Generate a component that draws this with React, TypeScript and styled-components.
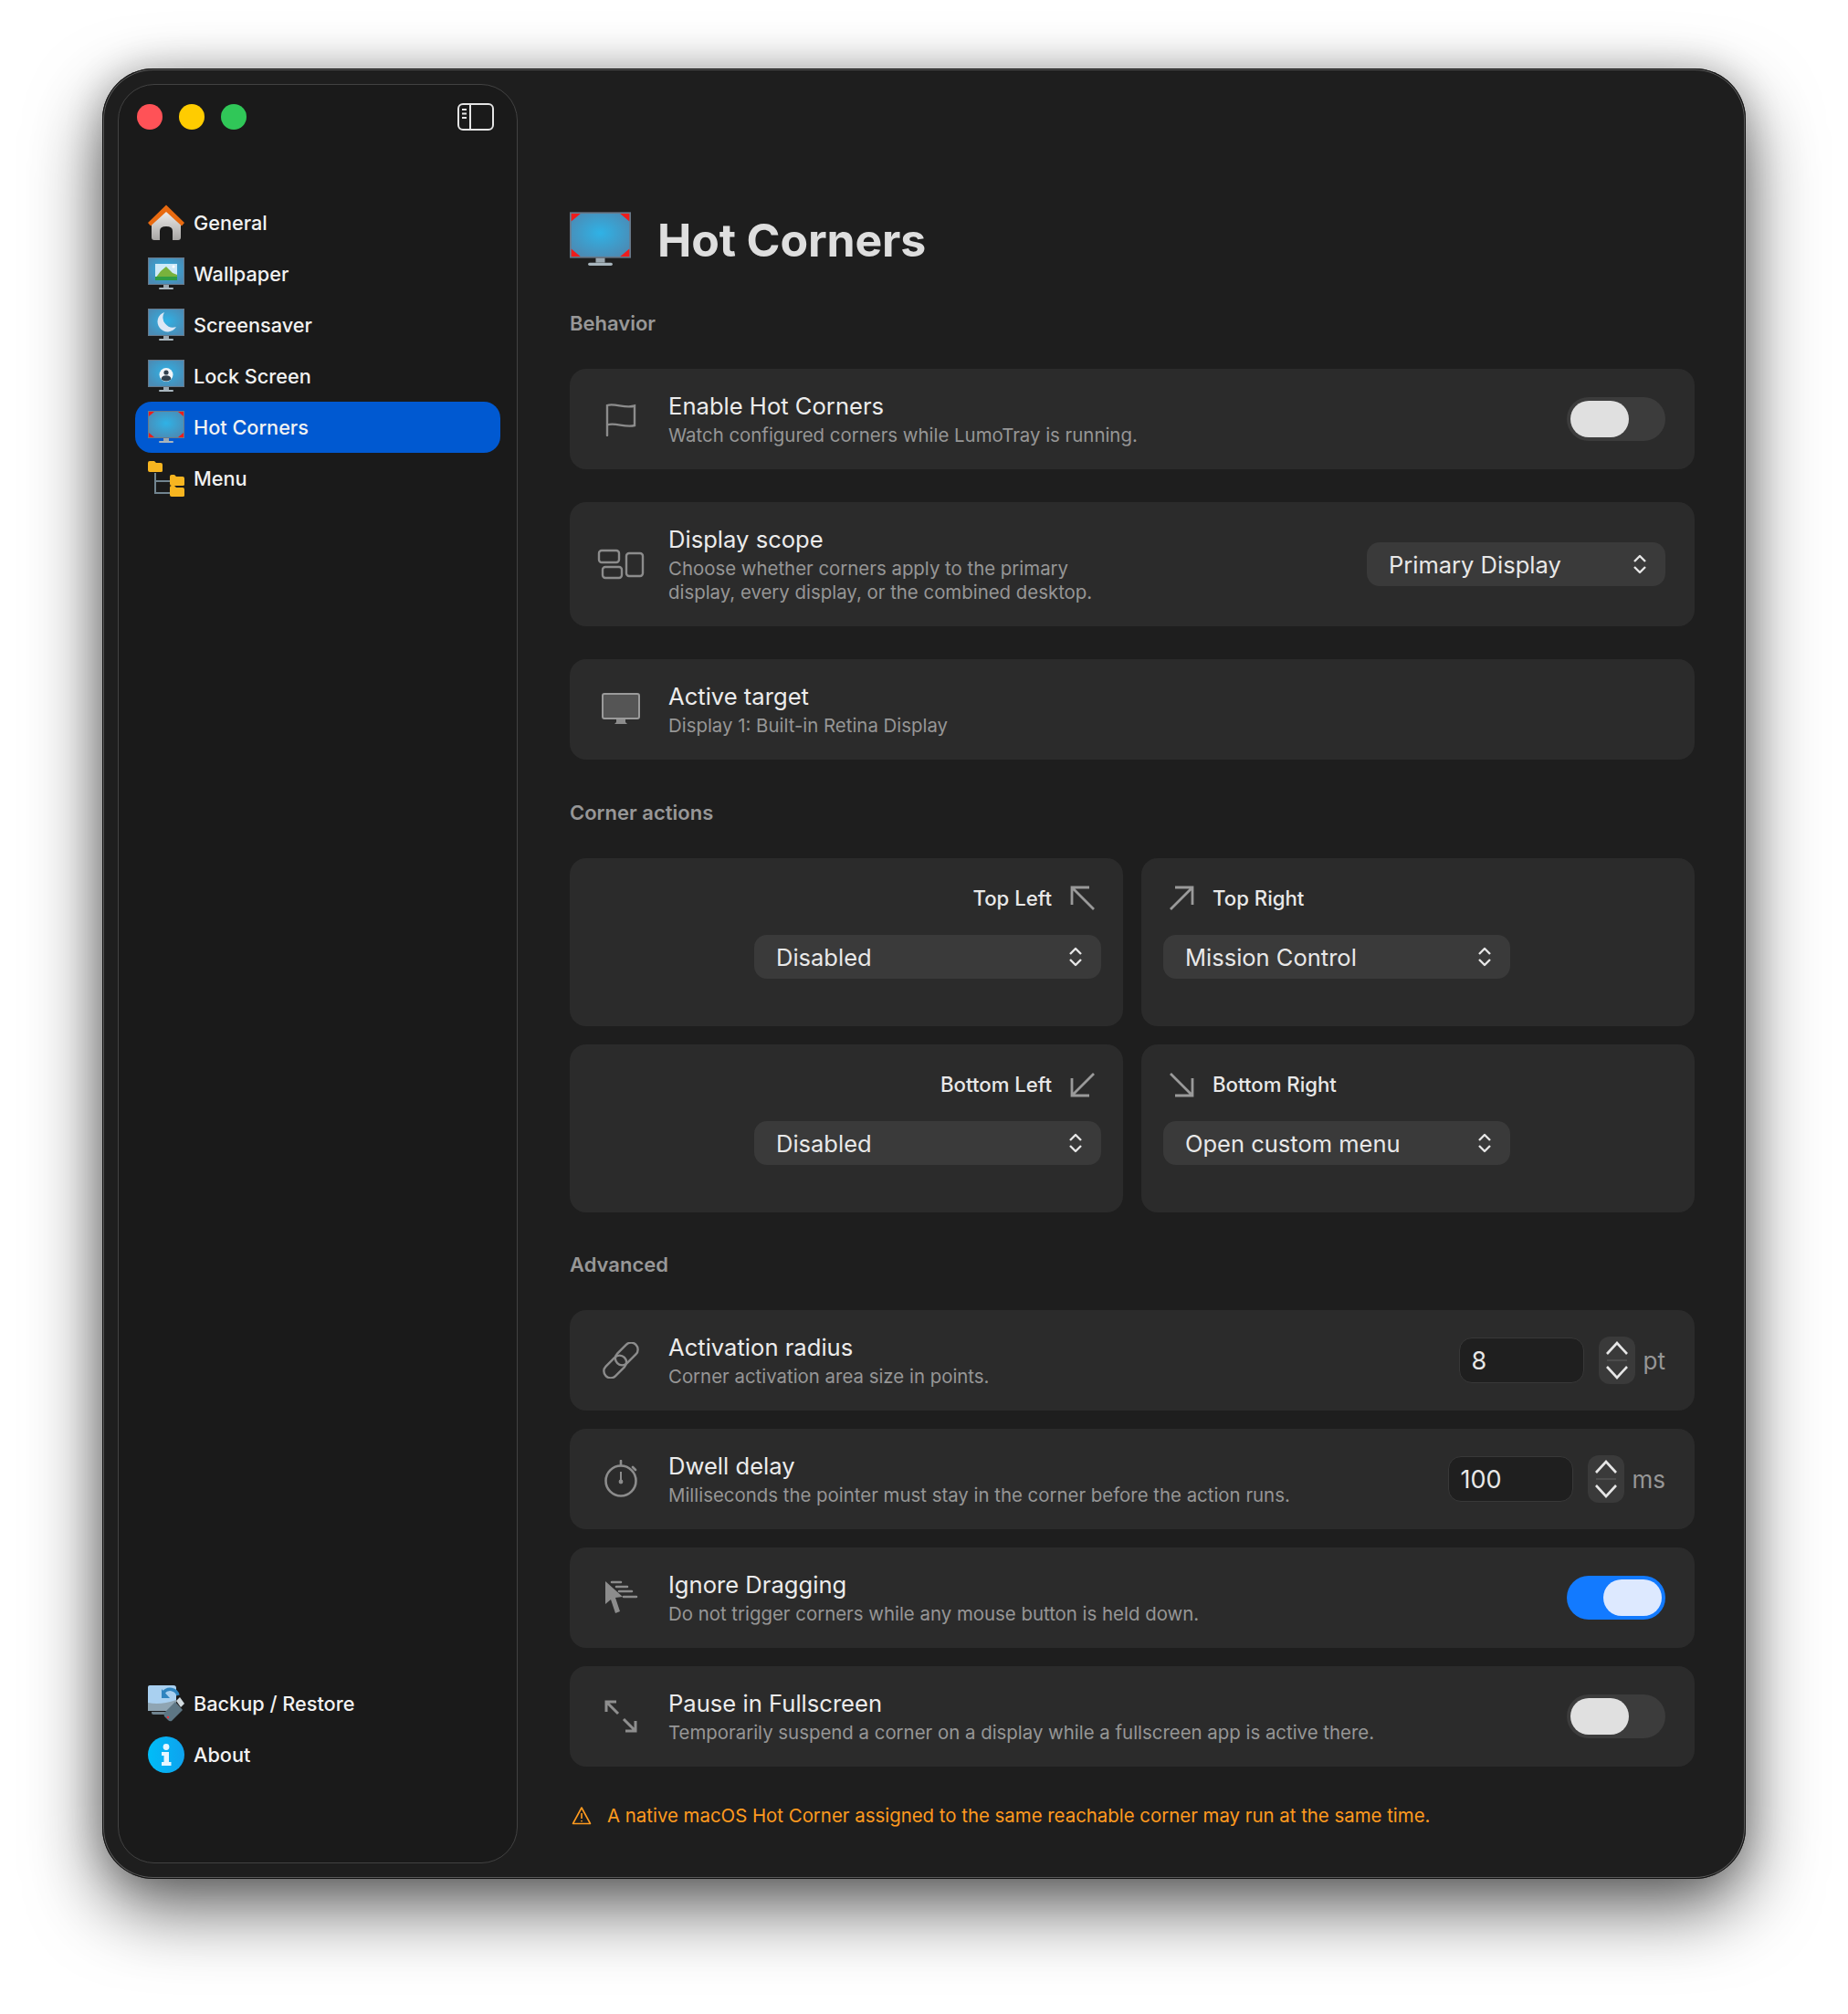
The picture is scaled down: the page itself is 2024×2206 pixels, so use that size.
import React from "react";
import styled, { createGlobalStyle } from "styled-components";

const GlobalStyle = createGlobalStyle`
  html, body {
    margin: 0;
    background: #fff;
  }
  body {
    font-family: Inter, "Noto Sans", sans-serif;
    -webkit-font-smoothing: antialiased;
  }
`;

const MonitorIcon: React.FC<{ id: string; size: number; children?: React.ReactNode }> = ({
  id,
  size,
  children,
}) => (
  <svg width={size} height={size} viewBox="0 0 40 40">
    <defs>
      <radialGradient id={id} cx="50%" cy="45%" r="60%">
        <stop offset="0%" stopColor="#2fb2e6" />
        <stop offset="100%" stopColor="#4a8cb6" />
      </radialGradient>
    </defs>
    <rect x="0" y="2" width="40" height="30" fill="#68798a" />
    <rect x="1" y="3" width="38" height="28" fill={`url(#${id})`} />
    <rect x="17" y="32" width="6" height="3" fill="#9aa7b0" />
    <rect x="12" y="35" width="16" height="2" rx="1" fill="#a9b6be" />
    {children}
  </svg>
);

const Corners = () => (
  <g fill="#ee1c1c">
    <path d="M1 3h6l-6 5z" />
    <path d="M39 3h-6l6 5z" />
    <path d="M1 31h6l-6-5z" />
    <path d="M39 31h-6l6-5z" />
  </g>
);

const HomeIcon = () => (
  <svg width="40" height="40" viewBox="0 0 40 40">
    <defs>
      <linearGradient id="home-wall" x1="0" y1="0" x2="0" y2="1">
        <stop offset="0%" stopColor="#f0efee" />
        <stop offset="100%" stopColor="#a8a6a4" />
      </linearGradient>
    </defs>
    <path
      fillRule="evenodd"
      d="M20 6 L36 20 V36 Q36 39 33 39 H27 V29 Q27 24 20 24 Q13 24 13 29 V39 H7 Q4 39 4 36 V20 Z"
      fill="url(#home-wall)"
    />
    <path d="M20 0.5 L40 20 L37 23.5 L20 8 L3 23.5 L0 20 Z" fill="#e86a10" />
  </svg>
);

const MenuIcon = () => (
  <svg width="40" height="40" viewBox="0 0 40 40">
    <path d="M8 14V36H25M8 23H25" fill="none" stroke="#71848f" strokeWidth="2" />
    <path d="M0 3q0-2 2-2h5l2 2h5q2 0 2 2v7q0 1-2 1H2q-2 0-2-2z" fill="#f7b520" />
    <path d="M24 18q0-2 2-2h3l2 2h7q2 0 2 2v7q0 1-2 1H26q-2 0-2-2z" fill="#f7b520" />
    <path d="M24 30q0-2 2-2h3l2 2h7q2 0 2 2v7q0 1-2 1H26q-2 0-2-2z" fill="#f7b520" />
  </svg>
);

const BackupIcon = () => (
  <svg width="40" height="40" viewBox="0 0 40 40">
    <path d="M2 0H28Q31 0 31 3V24H0V2Q0 0 2 0Z" fill="#a9d0f0" />
    <path d="M0 19Q14 22 31 16V28H0Z" fill="#8fa5b3" />
    <path d="M4 29H24V32H6Q4 32 4 30Z" fill="#6f838e" />
    <path d="M17 8A9 9 0 0 1 33 11" fill="none" stroke="#2f84bf" strokeWidth="3.5" />
    <path d="M15 4V14H24Z" fill="#2f84bf" />
    <path d="M18 30L30 18L38 27L26 39Q24 40 22 38L18 34Q17 32 18 30Z" fill="#5d7684" />
    <path d="M31 17L35 13L40 20L36 24Z" fill="#d2dbe0" />
    <circle cx="22" cy="35" r="1.2" fill="#ee2f3c" />
  </svg>
);

const AboutIcon = () => (
  <svg width="40" height="40" viewBox="0 0 40 40">
    <defs>
      <linearGradient id="about-bg" x1="0" y1="0" x2="1" y2="0">
        <stop offset="0%" stopColor="#00bdf8" />
        <stop offset="100%" stopColor="#0ea2ee" />
      </linearGradient>
    </defs>
    <circle cx="20" cy="20" r="20" fill="url(#about-bg)" />
    <circle cx="20" cy="11.5" r="3.4" fill="#e6f6ff" />
    <path d="M15 17H23V28H25.5V32H15V28H17.5V21H15Z" fill="#e6f6ff" />
  </svg>
);

const FlagIcon = () => (
  <svg width="34" height="37" viewBox="0 0 34 37" fill="none" stroke="#8c8c8c" strokeWidth="2.4">
    <path d="M2 36V3C10 0 22 7 32 3.5V25C22 28 10 21 2 24.5" strokeLinecap="round" />
  </svg>
);

const DisplaysIcon = () => (
  <svg width="52" height="34" viewBox="0 0 52 34" fill="none" stroke="#8c8c8c" strokeWidth="2.4">
    <rect x="2" y="2" width="22" height="13" rx="3" />
    <rect x="6" y="20" width="21" height="12" rx="3" />
    <rect x="32" y="5" width="18" height="25" rx="3" />
  </svg>
);

const ScreenIcon = () => (
  <svg width="44" height="38" viewBox="0 0 44 38">
    <rect x="2" y="2" width="40" height="27" rx="2" fill="#555" stroke="#9a9a9a" strokeWidth="2" />
    <path d="M17 30H27V33L29 35H15L17 33Z" fill="#8c8c8c" />
  </svg>
);

const LinkIcon = () => (
  <svg width="40" height="40" viewBox="0 0 40 40" fill="none" stroke="#8c8c8c" strokeWidth="2.4">
    <g transform="rotate(-45 20 20)">
      <rect x="15" y="12" width="28.75" height="15" rx="7.5" />
      <rect x="-3.75" y="13" width="28.75" height="15" rx="7.5" />
    </g>
  </svg>
);

const WatchIcon = () => (
  <svg width="40" height="42" viewBox="0 0 40 42" fill="none" stroke="#8c8c8c" strokeWidth="2.6">
    <circle cx="20" cy="23" r="16.5" />
    <path d="M20 1V6M33 8L36 11" strokeLinecap="round" />
    <path d="M20 13V23" strokeWidth="2" />
    <circle cx="20" cy="24" r="2.4" fill="#8c8c8c" stroke="none" />
  </svg>
);

const DragIcon = () => (
  <svg width="38" height="38" viewBox="0 0 38 38">
    <path d="M2 1L2 26L8 21L13 36L18 34L13 19L21 18Z" fill="#8c8c8c" />
    <path
      d="M9 2H19M14 7H26M17 12H31M22 18H36"
      stroke="#8c8c8c"
      strokeWidth="2.6"
      strokeLinecap="round"
    />
  </svg>
);

const ExpandIcon = () => (
  <svg width="38" height="38" viewBox="0 0 38 38" fill="none" stroke="#8e8e8e" strokeWidth="3">
    <path d="M3 14V3H14M3 3L16 16" />
    <path d="M35 24V35H24M35 35L22 22" />
  </svg>
);

const WarnIcon = () => (
  <svg width="22" height="22" viewBox="0 0 22 22" fill="none" stroke="#ff9a1f" strokeWidth="1.6">
    <path d="M11 2L20.5 19.5H1.5Z" strokeLinejoin="round" />
    <path d="M11 8V14" />
    <circle cx="11" cy="16.6" r="0.9" fill="#ff9a1f" stroke="none" />
  </svg>
);

const SidebarToggleIcon = () => (
  <svg width="40" height="30" viewBox="0 0 40 30" fill="none" stroke="#e4e4e4" strokeWidth="2">
    <rect x="1" y="1" width="38" height="28" rx="5" />
    <path d="M14 1V29" />
    <path d="M5 7H10M5 11.5H10M5 16H10" strokeWidth="1.8" />
  </svg>
);

const Chevrons = () => (
  <svg width="16" height="22" viewBox="0 0 16 22" fill="none" stroke="#e6e6e6" strokeWidth="2.4">
    <path d="M2 8L8 2L14 8M2 14L8 20L14 14" strokeLinejoin="round" />
  </svg>
);

const CornerArrow: React.FC<{ dir: "tl" | "tr" | "bl" | "br" }> = ({ dir }) => {
  const flip = {
    tl: "",
    tr: "translate(28 0) scale(-1 1)",
    bl: "translate(0 28) scale(1 -1)",
    br: "translate(28 28) scale(-1 -1)",
  }[dir];
  return (
    <svg width="28" height="28" viewBox="0 0 28 28" fill="none" stroke="#9a9a9a" strokeWidth="2.8">
      <path transform={flip} d="M2 21V2H21M2 2L26 26" />
    </svg>
  );
};

const StepperIcon = () => (
  <svg width="26" height="44" viewBox="0 0 26 44" fill="none" stroke="#e6e6e6" strokeWidth="2.6">
    <path d="M2 15L13 3L24 15M2 29L13 41L24 29" />
    <path d="M2 22H24" stroke="#555" strokeWidth="1.4" />
  </svg>
);

const Page = styled.div`
  padding: 75px 0 148px 112px;
  overflow: hidden;
`;

const Window = styled.div`
  width: 1800px;
  height: 1983px;
  box-sizing: border-box;
  display: flex;
  background: #1e1e1e;
  border-radius: 56px;
  box-shadow: inset 0 0 0 1px #111, inset 0 0 0 2px #5a5a5a, 0 32px 80px rgba(0, 0, 0, 0.62),
    0 0 40px rgba(0, 0, 0, 0.2);
`;

const Sidebar = styled.aside`
  width: 438px;
  height: 1949px;
  margin: 17px 0 0 17px;
  box-sizing: border-box;
  display: flex;
  flex-direction: column;
  background: #1a1a1a;
  border: 1px solid #424242;
  border-radius: 40px;
  padding: 0 18px 90px;
`;

const TitleBar = styled.div`
  display: flex;
  align-items: center;
  justify-content: space-between;
  height: 28px;
  margin: 21px 7px 0 2px;
`;

const Lights = styled.div`
  display: flex;
  gap: 18px;
`;

const Light = styled.span<{ $color: string }>`
  width: 28px;
  height: 28px;
  border-radius: 50%;
  background: ${(p) => p.$color};
`;

const Nav = styled.nav`
  display: flex;
  flex-direction: column;
  margin-top: 74px;
`;

const BottomNav = styled(Nav)`
  margin-top: auto;
`;

const NavItem = styled.div<{ $active?: boolean }>`
  height: 56px;
  display: flex;
  align-items: center;
  gap: 10px;
  padding-left: 14px;
  border-radius: 18px;
  background: ${(p) => (p.$active ? "#0059d1" : "transparent")};
  color: #f2f2f2;
  font-size: 21.7px;
  font-weight: 500;
`;

const Main = styled.main`
  flex: 1;
  padding: 154px 56px 0 57px;
  min-width: 0;
`;

const Header = styled.header`
  display: flex;
  align-items: center;
  gap: 29px;
  height: 67px;
`;

const PageTitle = styled.h1`
  margin: 0;
  color: #dedede;
  font-size: 50px;
  font-weight: 700;
  letter-spacing: -0.15px;
`;

const SectionLabel = styled.h2<{ $top: number }>`
  margin: ${(p) => p.$top}px 0 36px;
  height: 28px;
  line-height: 28px;
  color: #979797;
  font-size: 22px;
  font-weight: 600;
`;

const Stack = styled.div<{ $gap: number }>`
  display: flex;
  flex-direction: column;
  gap: ${(p) => p.$gap}px;
`;

const Card = styled.div`
  display: flex;
  align-items: center;
  box-sizing: border-box;
  padding: 24.5px 32px 24.5px 24px;
  background: #2b2b2b;
  border-radius: 18px;
`;

const IconSlot = styled.div`
  width: 64px;
  flex: none;
  display: flex;
  align-items: center;
  justify-content: center;
  margin-right: 20px;
`;

const Body = styled.div`
  flex: 1;
  min-width: 0;
`;

const RowTitle = styled.div`
  color: #ececec;
  font-size: 25.6px;
  line-height: 32px;
`;

const RowDesc = styled.div`
  color: #969696;
  font-size: 20.4px;
  line-height: 26px;
  margin-top: 3px;
`;

const Select = styled.div<{ $width: number }>`
  width: ${(p) => p.$width}px;
  height: 48px;
  box-sizing: border-box;
  display: flex;
  align-items: center;
  justify-content: space-between;
  padding: 0 20px 0 24px;
  background: #3a3a3a;
  border-radius: 14px;
  color: #e8e8e8;
  font-size: 25.5px;
`;

const Toggle = styled.div<{ $on?: boolean }>`
  width: 108px;
  height: 48px;
  box-sizing: border-box;
  padding: 4px;
  display: flex;
  justify-content: ${(p) => (p.$on ? "flex-end" : "flex-start")};
  background: ${(p) => (p.$on ? "#127aff" : "#3c3c3c")};
  border-radius: 24px;
`;

const Knob = styled.span<{ $on?: boolean }>`
  width: 64px;
  height: 40px;
  border-radius: 20px;
  background: ${(p) => (p.$on ? "#dde9ff" : "#e0e0e0")};
`;

const CornerGrid = styled.div`
  display: grid;
  grid-template-columns: 1fr 1fr;
  gap: 20px;
`;

const CornerCard = styled.div<{ $side: "left" | "right" }>`
  height: 184px;
  box-sizing: border-box;
  padding: 26px 24px 0;
  display: flex;
  flex-direction: column;
  align-items: ${(p) => (p.$side === "left" ? "flex-end" : "flex-start")};
  background: #2b2b2b;
  border-radius: 18px;
`;

const CornerHead = styled.div`
  height: 34px;
  display: flex;
  align-items: center;
  gap: 20px;
  margin: 0 6px 24px;
  color: #e8e8e8;
  font-size: 22.2px;
  font-weight: 500;

  svg {
    margin-top: 2px;
  }
`;

const NumberWrap = styled.div`
  display: flex;
  align-items: center;
`;

const NumberInput = styled.div`
  width: 137px;
  height: 50px;
  box-sizing: border-box;
  padding-left: 13px;
  display: flex;
  align-items: center;
  background: #1f1f1f;
  border: 1px solid #383838;
  border-radius: 14px;
  color: #e8e8e8;
  font-size: 27px;
`;

const Stepper = styled.div`
  width: 40px;
  height: 52px;
  margin: 0 9px 0 16px;
  display: flex;
  align-items: center;
  justify-content: center;
  background: #3a3a3a;
  border-radius: 12px;
`;

const Unit = styled.span`
  color: #969696;
  font-size: 26px;
`;

const Warning = styled.div`
  display: flex;
  align-items: center;
  gap: 17px;
  margin-top: 41px;
  padding-left: 2px;
  color: #ff9a1f;
  font-size: 20.4px;
  line-height: 26px;
`;

type NavEntry = { label: string; icon: React.ReactNode; active?: boolean };

const mainNav: NavEntry[] = [
  { label: "General", icon: <HomeIcon /> },
  {
    label: "Wallpaper",
    icon: (
      <MonitorIcon id="wall" size={40}>
        <rect x="8" y="9" width="24" height="18" fill="#cfeaf8" />
        <path d="M8 25L14 17L20 12L27 19L32 21V27H8Z" fill="#79b23c" />
        <rect x="8" y="23" width="24" height="4" fill="#2f9c45" />
        <circle cx="28" cy="12" r="1.5" fill="#fff" />
      </MonitorIcon>
    ),
  },
  {
    label: "Screensaver",
    icon: (
      <MonitorIcon id="saver" size={40}>
        <path d="M18 6A11 11 0 1 0 31 22A11 11 0 0 1 18 6Z" fill="#dce7f5" />
      </MonitorIcon>
    ),
  },
  {
    label: "Lock Screen",
    icon: (
      <MonitorIcon id="lock" size={40}>
        <g transform="translate(0 2.5)">
          <circle cx="20" cy="16" r="7.5" fill="#f1f5f8" />
          <circle cx="20" cy="13.5" r="2.6" fill="#33414d" />
          <path d="M14.6 21Q15 16.8 20 16.8Q25 16.8 25.4 21Q23 23 20 23Q17 23 14.6 21Z" fill="#33414d" />
        </g>
      </MonitorIcon>
    ),
  },
  {
    label: "Hot Corners",
    active: true,
    icon: (
      <MonitorIcon id="hot" size={40}>
        <Corners />
      </MonitorIcon>
    ),
  },
  { label: "Menu", icon: <MenuIcon /> },
];

const footerNav: NavEntry[] = [
  { label: "Backup / Restore", icon: <BackupIcon /> },
  { label: "About", icon: <AboutIcon /> },
];

type RowEntry = {
  title: string;
  desc: React.ReactNode;
  icon: React.ReactNode;
  control?: React.ReactNode;
};

const advancedRows: RowEntry[] = [
  {
    title: "Activation radius",
    desc: "Corner activation area size in points.",
    icon: <LinkIcon />,
    control: (
      <NumberWrap>
        <NumberInput>8</NumberInput>
        <Stepper>
          <StepperIcon />
        </Stepper>
        <Unit>pt</Unit>
      </NumberWrap>
    ),
  },
  {
    title: "Dwell delay",
    desc: "Milliseconds the pointer must stay in the corner before the action runs.",
    icon: <WatchIcon />,
    control: (
      <NumberWrap>
        <NumberInput>100</NumberInput>
        <Stepper>
          <StepperIcon />
        </Stepper>
        <Unit>ms</Unit>
      </NumberWrap>
    ),
  },
  {
    title: "Ignore Dragging",
    desc: "Do not trigger corners while any mouse button is held down.",
    icon: <DragIcon />,
    control: (
      <Toggle $on>
        <Knob $on />
      </Toggle>
    ),
  },
  {
    title: "Pause in Fullscreen",
    desc: "Temporarily suspend a corner on a display while a fullscreen app is active there.",
    icon: <ExpandIcon />,
    control: (
      <Toggle>
        <Knob />
      </Toggle>
    ),
  },
];

const corners = [
  { label: "Top Left", value: "Disabled", dir: "tl", side: "left" },
  { label: "Top Right", value: "Mission Control", dir: "tr", side: "right" },
  { label: "Bottom Left", value: "Disabled", dir: "bl", side: "left" },
  { label: "Bottom Right", value: "Open custom menu", dir: "br", side: "right" },
] as const;

const Row: React.FC<RowEntry> = ({ title, desc, icon, control }) => (
  <Card>
    <IconSlot>{icon}</IconSlot>
    <Body>
      <RowTitle>{title}</RowTitle>
      <RowDesc>{desc}</RowDesc>
    </Body>
    {control}
  </Card>
);

export default function App() {
  return (
    <Page>
      <GlobalStyle />
      <Window>
        <Sidebar>
          <TitleBar>
            <Lights>
              <Light $color="#ff5257" />
              <Light $color="#ffcc00" />
              <Light $color="#30c758" />
            </Lights>
            <SidebarToggleIcon />
          </TitleBar>
          <Nav>
            {mainNav.map((item) => (
              <NavItem key={item.label} $active={item.active}>
                {item.icon}
                {item.label}
              </NavItem>
            ))}
          </Nav>
          <BottomNav>
            {footerNav.map((item) => (
              <NavItem key={item.label}>
                {item.icon}
                {item.label}
              </NavItem>
            ))}
          </BottomNav>
        </Sidebar>
        <Main>
          <Header>
            <MonitorIcon id="title" size={67}>
              <Corners />
            </MonitorIcon>
            <PageTitle>Hot Corners</PageTitle>
          </Header>

          <SectionLabel $top={44}>Behavior</SectionLabel>
          <Stack $gap={36}>
            <Row
              title="Enable Hot Corners"
              desc="Watch configured corners while LumoTray is running."
              icon={<FlagIcon />}
              control={
                <Toggle>
                  <Knob />
                </Toggle>
              }
            />
            <Row
              title="Display scope"
              desc={
                <>
                  Choose whether corners apply to the primary
                  <br />
                  display, every display, or the combined desktop.
                </>
              }
              icon={<DisplaysIcon />}
              control={
                <Select $width={327}>
                  Primary Display
                  <Chevrons />
                </Select>
              }
            />
            <Row
              title="Active target"
              desc="Display 1: Built-in Retina Display"
              icon={<ScreenIcon />}
            />
          </Stack>

          <SectionLabel $top={44}>Corner actions</SectionLabel>
          <CornerGrid>
            {corners.map((corner) => (
              <CornerCard key={corner.label} $side={corner.side}>
                <CornerHead>
                  {corner.side === "left" ? corner.label : <CornerArrow dir={corner.dir} />}
                  {corner.side === "left" ? <CornerArrow dir={corner.dir} /> : corner.label}
                </CornerHead>
                <Select $width={380}>
                  {corner.value}
                  <Chevrons />
                </Select>
              </CornerCard>
            ))}
          </CornerGrid>

          <SectionLabel $top={43}>Advanced</SectionLabel>
          <Stack $gap={20}>
            {advancedRows.map((row) => (
              <Row key={row.title} {...row} />
            ))}
          </Stack>

          <Warning>
            <WarnIcon />A native macOS Hot Corner assigned to the same reachable corner may run at
            the same time.
          </Warning>
        </Main>
      </Window>
    </Page>
  );
}
